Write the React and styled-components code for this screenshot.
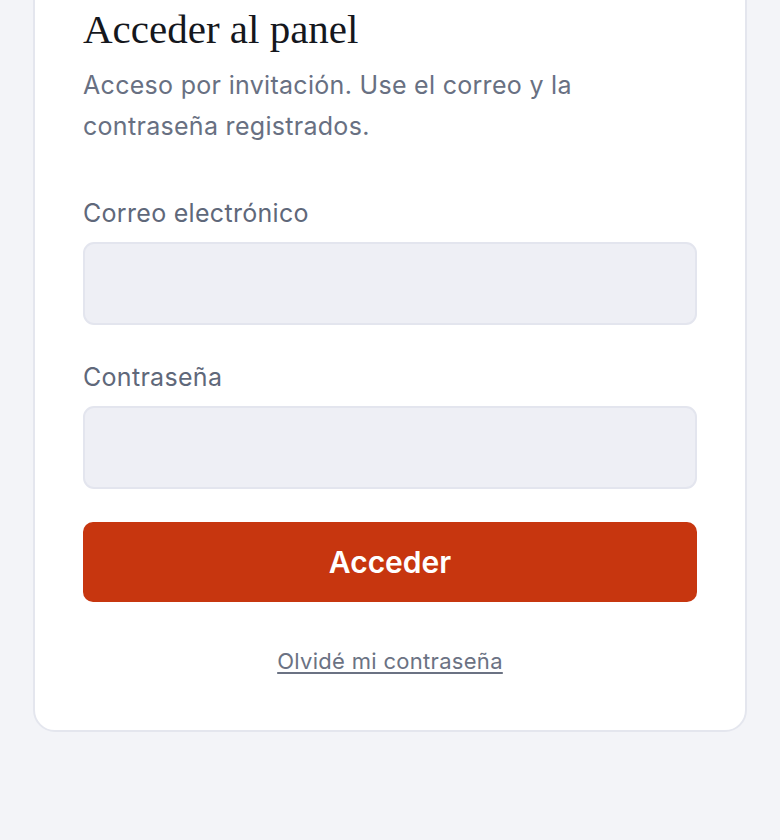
import React from 'react'
import styled, { createGlobalStyle } from 'styled-components'

const GlobalStyle = createGlobalStyle`
  html, body {
    margin: 0;
    padding: 0;
    background: #f3f4f8;
  }
  * {
    box-sizing: border-box;
  }
`

const Page = styled.div`
  height: 100vh;
  overflow: hidden;
  display: flex;
  flex-direction: column;
  justify-content: flex-end;
  padding: 0 33px 108px;
  font-family: Inter, "Liberation Sans", Arial, sans-serif;
`

const Card = styled.div`
  flex-shrink: 0;
  background: #fff;
  border: 2px solid #e4e6ee;
  border-radius: 22px;
  padding: 120px 48px 55px;
`

const Title = styled.h1`
  margin: 0;
  font-family: "Liberation Serif", "DejaVu Serif", serif;
  font-weight: 400;
  font-size: 41px;
  line-height: 44px;
  color: #15171d;
`

const Lead = styled.p`
  margin: 14px 0 0;
  max-width: 560px;
  font-size: 25px;
  line-height: 41px;
  letter-spacing: 0.3px;
  color: #687082;
`

const Form = styled.form`
  display: flex;
  flex-direction: column;
  margin-top: 52px;
`

const Field = styled.div`
  display: flex;
  flex-direction: column;
  gap: 15px;
  margin-bottom: ${p => p.$last ? '33px' : '38px'};
`

const Label = styled.label`
  font-size: 25px;
  line-height: 28px;
  letter-spacing: 0.3px;
  color: #5f687a;
`

const Input = styled.input`
  height: 83px;
  border: 2px solid #e3e5ee;
  border-radius: 11px;
  background: #eeeff5;
  padding: 0 18px;
  font: inherit;
  font-size: 22px;
  outline: none;
`

const Button = styled.button`
  height: 80px;
  border: none;
  border-radius: 10px;
  background: #c7360f;
  color: #fff;
  font-family: inherit;
  font-size: 30px;
  font-weight: 600;
  cursor: pointer;
`

const Forgot = styled.a`
  align-self: center;
  margin-top: 45px;
  font-size: 22px;
  line-height: 28px;
  letter-spacing: 0.3px;
  color: #6b7283;
  text-decoration: underline;
  text-underline-offset: 3px;
  cursor: pointer;
`

export default function App() {
  return (
    <Page>
      <GlobalStyle />
      <Card>
        <Title>Acceder al panel</Title>
        <Lead>Acceso por invitación. Use el correo y la contraseña registrados.</Lead>
        <Form onSubmit={e => e.preventDefault()}>
          <Field>
            <Label htmlFor="email">Correo electrónico</Label>
            <Input id="email" type="email" />
          </Field>
          <Field $last>
            <Label htmlFor="password">Contraseña</Label>
            <Input id="password" type="password" />
          </Field>
          <Button type="submit">Acceder</Button>
          <Forgot>Olvidé mi contraseña</Forgot>
        </Form>
      </Card>
    </Page>
  )
}
